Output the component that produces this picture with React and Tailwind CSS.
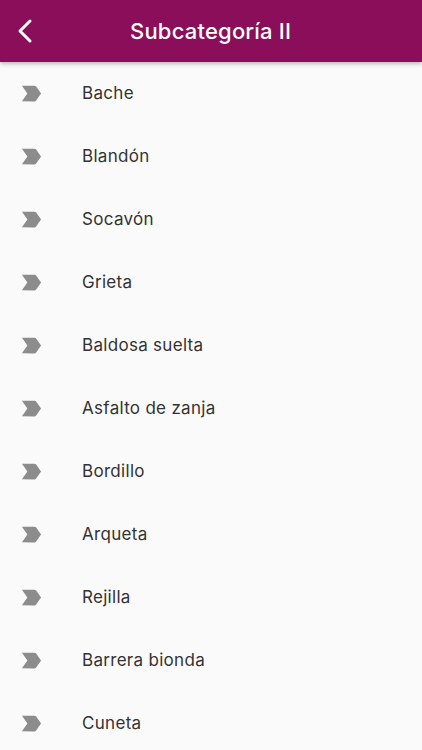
import React from "react";

const items = [
  "Bache",
  "Blandón",
  "Socavón",
  "Grieta",
  "Baldosa suelta",
  "Asfalto de zanja",
  "Bordillo",
  "Arqueta",
  "Rejilla",
  "Barrera bionda",
  "Cuneta",
];

function LabelIcon() {
  return (
    <svg width="27" height="27" viewBox="0 0 24 24" className="shrink-0">
      <path
        fill="#8c8c8c"
        d="M3.5 18.99l11 .01c.67 0 1.27-.33 1.63-.84L20.5 12l-4.37-6.16c-.36-.51-.96-.84-1.63-.84l-11 .01L8.34 12 3.5 18.99z"
      />
    </svg>
  );
}

export default function App() {
  return (
    <div
      className="w-[422px] h-[750px] overflow-hidden bg-[#fafafa] flex flex-col"
      style={{ fontFamily: "Inter, 'Noto Sans', sans-serif" }}
    >
      <header className="relative z-10 shrink-0 h-[62px] bg-[#8b0e5a] flex items-center shadow-[0_2px_4px_rgba(0,0,0,0.25)]">
        <div className="w-[56px] flex items-center pl-[15px]">
          <svg width="22" height="26" viewBox="0 0 22 26">
            <path
              d="M15 3 L5 13 L15 23"
              fill="none"
              stroke="white"
              strokeWidth="3"
              strokeLinecap="round"
              strokeLinejoin="round"
            />
          </svg>
        </div>
        <div className="flex-1 pl-[74px] text-white text-[22px] font-medium tracking-[0.2px]">
          Subcategoría II
        </div>
      </header>
      <ul className="flex flex-col shrink-0">
        {items.map((t) => (
          <li key={t} className="shrink-0 h-[63px] flex items-center pl-[18px]">
            <LabelIcon />
            <span className="ml-[37px] text-[17px] text-[#333333] tracking-[0.3px]">
              {t}
            </span>
          </li>
        ))}
      </ul>
    </div>
  );
}
